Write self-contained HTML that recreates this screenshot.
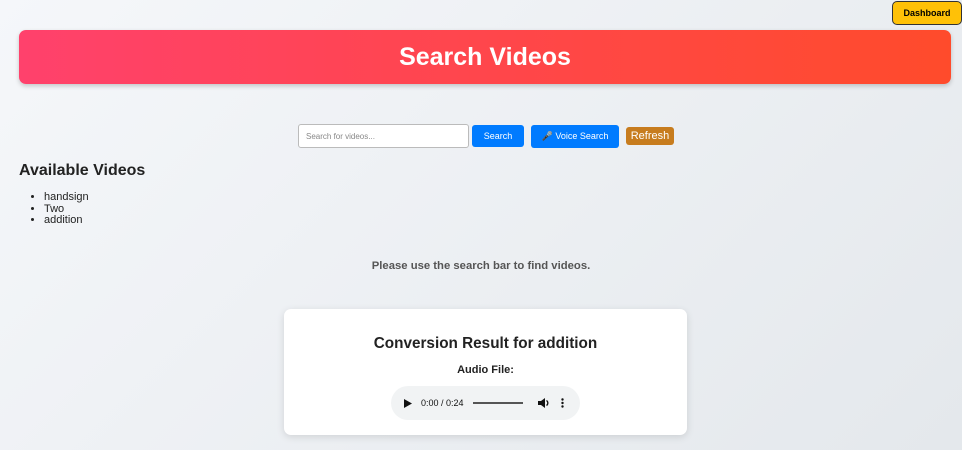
<!DOCTYPE html>
<html><head><style>
body{margin:0;width:962px;height:450px;overflow:hidden;font-family:"Liberation Sans",sans-serif;background:linear-gradient(135deg,#f5f7fa,#e4e8ec);position:relative;color:#333}
.dash{position:absolute;left:892px;top:1px;width:70px;height:24px;background:#ffc107;border:1px solid #333;border-radius:5px;font-size:9px;font-weight:bold;display:flex;align-items:center;justify-content:center;box-sizing:border-box;color:#000}
.hdr{position:absolute;left:19px;top:30px;width:932px;height:54px;border-radius:7px;background:linear-gradient(90deg,#ff416c,#ff4b2b);color:#fff;font-size:25px;font-weight:bold;display:flex;align-items:center;justify-content:center;box-shadow:0 2px 5px rgba(0,0,0,.2)}
.inp{position:absolute;left:298px;top:124px;width:171px;height:24px;border:1px solid #bbb;border-radius:3px;background:#fff;box-sizing:border-box;font-size:8px;color:#888;padding:7px 7px}
.btn{position:absolute;background:#007bff;color:#fff;border-radius:3px;font-size:9px;display:flex;align-items:center;justify-content:center}
h2{position:absolute;left:19px;top:162px;margin:0;font-size:16px;color:#222}
ul{position:absolute;left:26px;top:192px;margin:0;padding-left:18px;font-size:11px;line-height:11.5px;color:#222}
.msg{position:absolute;top:260px;width:100%;text-align:center;font-size:11.3px;font-weight:bold;color:#555}
.card{position:absolute;left:284px;top:309px;width:403px;height:126px;background:#fff;border-radius:7px;box-shadow:0 2px 8px rgba(0,0,0,.12)}
.card h3{margin:0;position:absolute;top:26px;width:100%;text-align:center;font-size:15.3px;color:#222}
.card p{margin:0;position:absolute;top:55px;width:100%;text-align:center;font-size:11px;font-weight:bold;color:#222}
.aud{position:absolute;left:107px;top:77px;width:189px;height:34px;border-radius:17px;background:#f1f3f4;font-size:9px;color:#111}
</style></head><body>
<div class="dash">Dashboard</div>
<div class="hdr">Search Videos</div>
<div class="inp">Search for videos...</div>
<div class="btn" style="left:472px;top:125px;width:52px;height:22px">Search</div>
<div class="btn" style="left:531px;top:125px;width:88px;height:23px">🎤 Voice Search</div>
<div class="btn" style="left:626px;top:127px;width:48px;height:18px;background:#c77c1e;font-size:11px">Refresh</div>
<h2>Available Videos</h2>
<ul><li>handsign</li><li>Two</li><li>addition</li></ul>
<div class="msg">Please use the search bar to find videos.</div>
<div class="card"><h3>Conversion Result for addition</h3><p>Audio File:</p>
<div class="aud">
<svg style="position:absolute;left:13px;top:13px" width="8" height="9"><path d="M0 0L8 4.5L0 9Z" fill="#111"/></svg>
<span style="position:absolute;left:30px;top:12px">0:00 / 0:24</span>
<div style="position:absolute;left:82px;top:16px;width:50px;height:2px;background:#555"></div>
<svg style="position:absolute;left:147px;top:12px" width="11" height="10"><path d="M0 3h3l4-3v10l-4-3H0z" fill="#111"/><path d="M8.5 2.5a3 3 0 0 1 0 5" stroke="#111" stroke-width="1.3" fill="none"/></svg>
<svg style="position:absolute;left:170px;top:12px" width="3" height="10"><circle cx="1.5" cy="1.5" r="1.2" fill="#111"/><circle cx="1.5" cy="5" r="1.2" fill="#111"/><circle cx="1.5" cy="8.5" r="1.2" fill="#111"/></svg>
</div></div>
</body></html>
